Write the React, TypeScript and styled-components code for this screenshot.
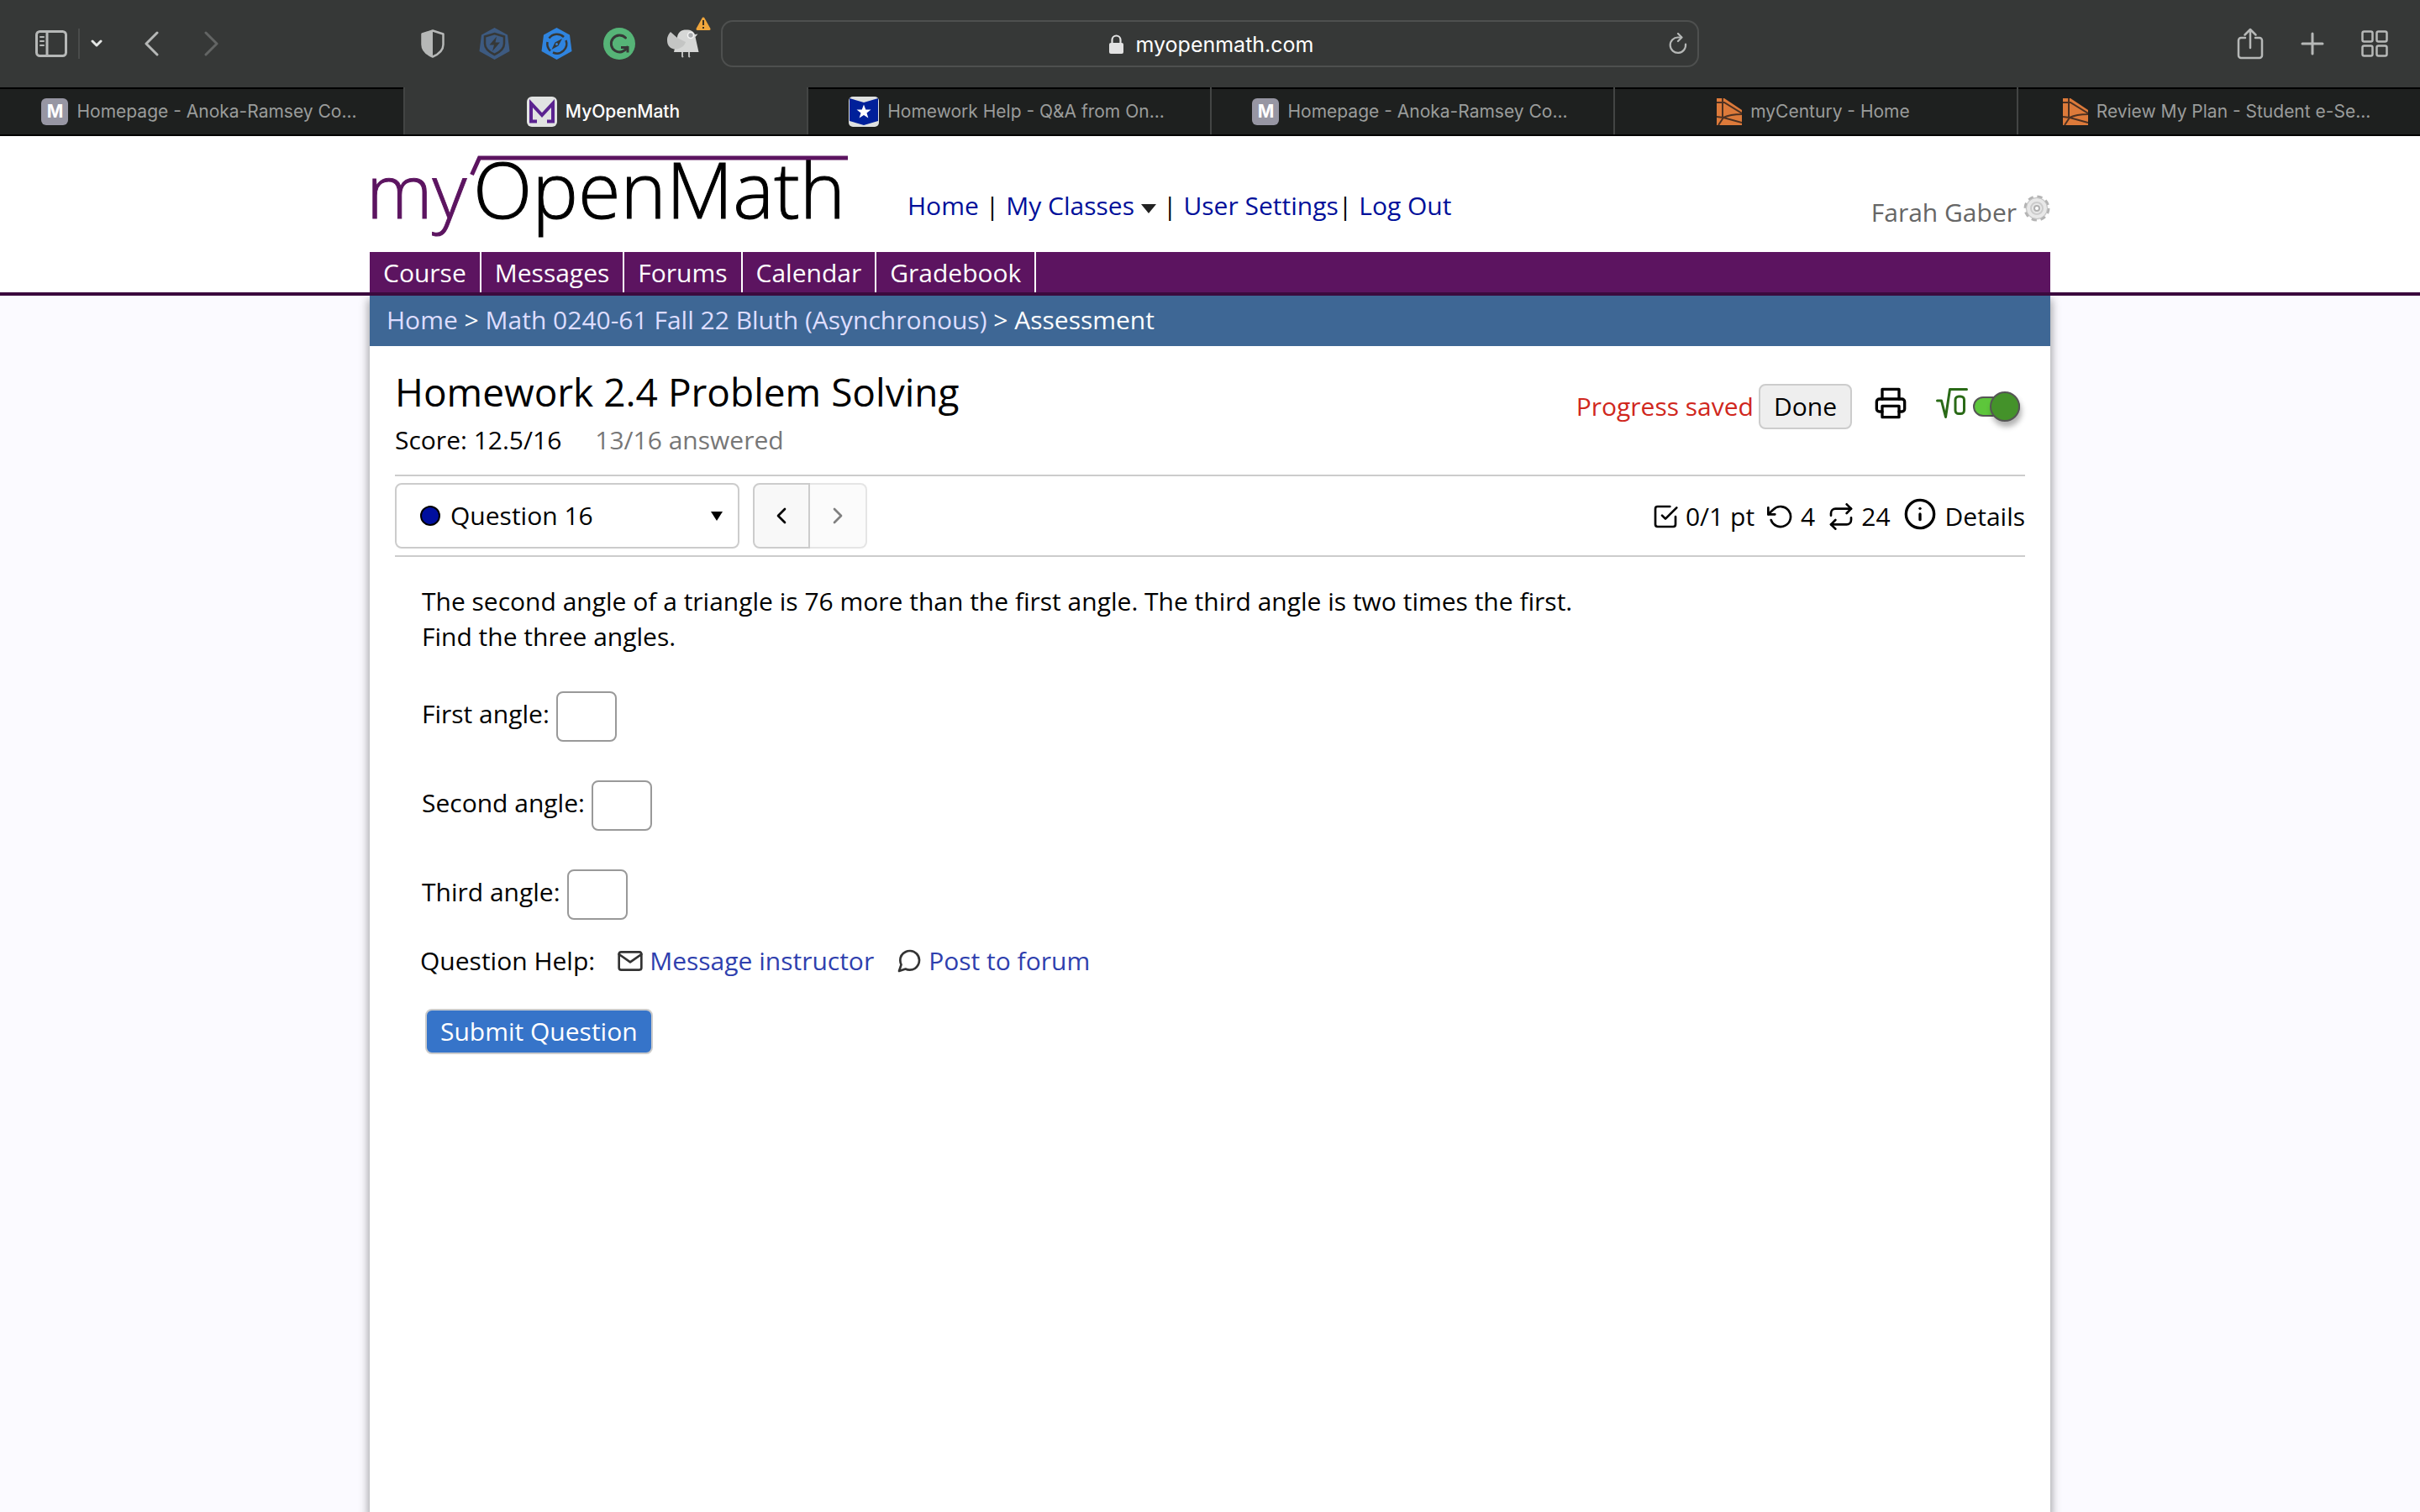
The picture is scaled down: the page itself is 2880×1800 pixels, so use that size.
import React from "react";
import styled, { createGlobalStyle, css } from "styled-components";
import {
  FiCheckSquare,
  FiChevronLeft,
  FiChevronRight,
  FiInfo,
  FiMail,
  FiMessageCircle,
  FiPrinter,
  FiRepeat,
  FiRotateCcw,
} from "react-icons/fi";

const color = {
  chrome: "#363837",
  tab: "#1e201f",
  tabText: "#9a9c9b",
  glyph: "#b6b8b7",
  purple: "#5c1460",
  purpleDark: "#3b0a3e",
  crumb: "#3e6795",
  crumbLink: "#ddddff",
  link: "#00109a",
  helpLink: "#2f3fae",
  rule: "#cccccc",
};

const siteFont = `"Open Sans", "Noto Sans", sans-serif`;
const systemFont = `Inter, "Liberation Sans", sans-serif`;

const GlobalStyle = createGlobalStyle`
  *, *::before, *::after { box-sizing: border-box; }
  html, body, #root { min-height: 100%; }
  body {
    margin: 0;
    background: #fbfaff;
    color: #000;
    font: 30px/42px ${siteFont};
  }
  a { color: inherit; text-decoration: none; }
  button, input, select { font: inherit; color: inherit; }
  svg { display: block; flex: none; }
`;

const Page = styled.div`
  min-height: 100vh;
  display: flex;
  flex-direction: column;
`;

/* ---------- browser window ---------- */

const Chrome = styled.header`
  background: ${color.chrome};
  border-bottom: 2px solid #000;
  font-family: ${systemFont};
`;

const Toolbar = styled.div`
  display: grid;
  grid-template-columns: minmax(0, 1fr) minmax(0, 1164px) minmax(0, 1fr);
  align-items: center;
  height: 104px;
`;

const ToolGroup = styled.div<{ $gap: number }>`
  display: flex;
  align-items: center;
  gap: ${(p) => p.$gap}px;
`;

const LeftTools = styled.div`
  display: flex;
  align-items: center;
  justify-content: space-between;
  padding: 0 12px 0 42px;
`;

const RightTools = styled(ToolGroup)`
  justify-content: flex-end;
  padding-right: 38px;
`;

const IconButton = styled.button<{ $dim?: boolean }>`
  display: flex;
  padding: 0;
  border: 0;
  background: none;
  color: ${(p) => (p.$dim ? "#636564" : color.glyph)};
`;

const BirdButton = styled(IconButton)`
  align-items: flex-start;
  height: 66px;
`;

const ToolDivider = styled.span`
  width: 2px;
  height: 36px;
  background: #4a4c4b;
`;

const AddressBar = styled.div`
  display: grid;
  grid-template-columns: 24px 1fr 24px;
  align-items: center;
  height: 56px;
  padding: 0 10px;
  border: 2px solid #4e504f;
  border-radius: 14px;
  color: #fff;
`;

const Address = styled.div`
  grid-column: 2;
  display: flex;
  align-items: center;
  justify-content: center;
  gap: 14px;
  padding: 2px 0 0 4px;
  font-size: 25px;
  line-height: 32px;
`;

const TabStrip = styled.nav`
  display: grid;
  grid-template-columns: repeat(6, minmax(0, 1fr));
`;

const Tab = styled.a<{ $active?: boolean }>`
  display: flex;
  align-items: center;
  justify-content: center;
  gap: 10px;
  height: 56px;
  padding: 2px 6px 0 0;
  border-left: 2px solid #434544;
  font-size: 21px;
  line-height: 28px;
  white-space: nowrap;
  ${(p) =>
    p.$active
      ? css`
          color: #fff;
          font-weight: 500;
        `
      : css`
          background: ${color.tab};
          color: ${color.tabText};
          box-shadow: inset 0 2px 0 #000;
        `}
  &:first-child {
    border-left: 0;
  }
`;

const LetterIcon = styled.span`
  display: grid;
  place-items: center;
  width: 32px;
  height: 32px;
  border-radius: 6px;
  background: #9796a3;
  color: #fff;
  font-size: 21px;
  font-weight: 700;
`;

/* ---------- site header ---------- */

const SiteHeader = styled.div`
  background: #fff;
  border-bottom: 4px solid ${color.purpleDark};
`;

const Wrap = styled.div`
  width: 100%;
  max-width: 2000px;
  margin: 0 auto;
`;

const TopRow = styled.div`
  display: flex;
  align-items: flex-end;
  height: 138px;
  padding-bottom: 20px;
`;

const UserLinks = styled.nav`
  display: flex;
  align-items: center;
  gap: 8px;
  margin: 0 auto 14px 68px;
  a {
    display: flex;
    align-items: center;
    gap: 8px;
    color: ${color.link};
  }
  svg {
    margin-top: 6px;
  }
`;

const TightPair = styled.span`
  display: flex;
`;

const UserName = styled.div`
  display: flex;
  align-items: flex-start;
  gap: 8px;
  margin-bottom: 6px;
  color: #666;
`;

const CourseNav = styled.nav`
  display: flex;
  background: ${color.purple};
  color: #fff;
  a {
    padding: 4px 16px 2px;
    border-right: 2px solid #fff;
  }
`;

/* ---------- assessment ---------- */

const Sheet = styled(Wrap)`
  flex: 1;
  background: #fff;
  box-shadow: 0 6px 10px 2px rgba(0, 0, 0, 0.35);
  clip-path: inset(0 -20px 0 -20px);
`;

const Breadcrumb = styled.nav`
  height: 60px;
  padding: 8px 20px;
  background: ${color.crumb};
  color: #fff;
  a {
    color: ${color.crumbLink};
  }
`;

const Main = styled.main`
  padding: 0 30px;
`;

const Heading = styled.div`
  display: flex;
  align-items: flex-start;
  justify-content: space-between;
  padding: 24px 0 20px;
  border-bottom: 2px solid ${color.rule};
`;

const Title = styled.h1`
  margin: 0 0 7px;
  font-size: 46px;
  line-height: 60px;
  font-weight: 400;
`;

const ScoreLine = styled.div`
  display: flex;
  gap: 40px;
`;

const Muted = styled.span`
  color: #777;
`;

const Actions = styled.div`
  display: flex;
  align-items: center;
  padding: 21px 6px 0 0;
`;

const Saved = styled.span`
  margin-right: 6px;
  color: #d0271d;
`;

const Button = styled.button<{ $primary?: boolean }>`
  height: 54px;
  padding: 0 16px;
  border: 2px solid ${color.rule};
  border-radius: 8px;
  background: ${(p) => (p.$primary ? "#3674c9" : "#eeeeee")};
  color: ${(p) => (p.$primary ? "#fff" : "#000")};
  line-height: 42px;
`;

const PrintButton = styled(IconButton)`
  margin: 0 34px 8px 26px;
  color: #000;
`;

const MathToggle = styled.label`
  display: flex;
  align-items: center;
  gap: 6px;
  > svg {
    margin-bottom: 8px;
  }
`;

const Switch = styled.input`
  appearance: none;
  display: flex;
  align-items: center;
  justify-content: flex-end;
  width: 56px;
  height: 24px;
  margin: 0;
  border: 2px solid #555;
  border-radius: 12px;
  background: #5dc63b;
  &::before {
    content: "";
    flex: none;
    width: 36px;
    height: 36px;
    margin-right: -2px;
    border: 2px solid #555;
    border-radius: 50%;
    background: #44922a;
    box-shadow: 2px 6px 6px rgba(0, 0, 0, 0.3);
  }
`;

const QuestionBar = styled.div`
  display: flex;
  align-items: center;
  padding: 8px 0;
  border-bottom: 2px solid ${color.rule};
`;

const Picker = styled.label`
  display: flex;
  align-items: center;
  gap: 12px;
  width: 410px;
  height: 78px;
  padding: 0 18px 0 28px;
  border: 2px solid ${color.rule};
  border-radius: 8px;
  select {
    flex: 1;
    appearance: none;
    padding: 0;
    border: 0;
    background: none;
  }
`;

const Dot = styled.span`
  width: 24px;
  height: 24px;
  border: 2px solid #000;
  border-radius: 50%;
  background: #000f9e;
`;

const Pager = styled.div`
  display: flex;
  margin: 0 auto 0 16px;
`;

const PagerButton = styled.button<{ $side: "left" | "right" }>`
  display: grid;
  place-items: center;
  width: 68px;
  height: 78px;
  padding: 0;
  border: 2px solid ${color.rule};
  border-radius: ${(p) => (p.$side === "left" ? "8px 0 0 8px" : "0 8px 8px 0")};
  background: #f8f8f8;
  color: #000;
  &:disabled {
    border-color: #e5e5e5;
    border-left: 0;
    background: #fbfbfb;
    color: #808080;
  }
`;

const Stats = styled.div`
  display: flex;
  align-items: center;
  gap: 15px;
  padding-top: 2px;
`;

const Stat = styled.span`
  display: flex;
  align-items: center;
  gap: 8px;
`;

const DetailsButton = styled.button`
  display: flex;
  align-items: flex-start;
  gap: 10px;
  padding: 0;
  border: 0;
  background: none;
  svg {
    margin-top: -2px;
  }
`;

const Question = styled.form`
  padding: 32px 30px;
`;

const Prompt = styled.p`
  margin: 0 0 44px;
  padding: 0 2px;
`;

const Answers = styled.div`
  display: grid;
  gap: 46px;
  padding: 0 2px;
`;

const Answer = styled.div`
  display: flex;
  gap: 8px;
  label {
    line-height: 54px;
  }
  input {
    width: 72px;
    height: 60px;
    padding: 0 8px;
    border: 2px solid #999;
    border-radius: 8px;
    background: #fff;
  }
`;

const Help = styled.div`
  display: flex;
  gap: 26px;
  margin: 28px 0 36px;
  a {
    display: flex;
    align-items: center;
    gap: 7px;
    color: ${color.helpLink};
  }
  svg {
    color: #333;
  }
`;

const SubmitRow = styled.div`
  padding: 0 6px;
`;

/* ---------- drawings ---------- */

const strokeProps = {
  fill: "none",
  stroke: "currentColor",
  strokeLinecap: "round" as const,
  strokeLinejoin: "round" as const,
};

const SidebarIcon = () => (
  <svg width="38" height="32" viewBox="0 0 38 32" {...strokeProps} strokeWidth="3">
    <rect x="1.5" y="1.5" width="35" height="29" rx="4" />
    <path d="M14 2v28" />
    <path d="M6 8h4M6 13h4M6 18h4" strokeWidth="2" />
  </svg>
);

const Caret = () => (
  <svg width="14" height="10" viewBox="0 0 14 10" {...strokeProps} stroke="#e4e6e5" strokeWidth="3">
    <path d="M2 2l5 5 5-5" />
  </svg>
);

const Chevron = ({ flip }: { flip?: boolean }) => (
  <svg width="18" height="30" viewBox="0 0 18 30" {...strokeProps} strokeWidth="3">
    <path d={flip ? "M2 2l13 13L2 28" : "M16 2L3 15l13 13"} />
  </svg>
);

const ShieldIcon = () => (
  <svg width="36" height="34" viewBox="-4 0 36 34">
    <path d="M14 1.5L26.5 5.5V18c0 7-5.5 11.5-12.5 14.5C7 29.5 1.5 25 1.5 18V5.5z" fill="none" stroke={color.glyph} strokeWidth="2.5" strokeLinejoin="round" />
    <path d="M14 1.5v31C7 29.5 1.5 25 1.5 18V5.5z" fill={color.glyph} />
  </svg>
);

const BoltIcon = () => (
  <svg width="37" height="38" viewBox="0 0 37 38">
    <path d="M18.5 0L34 8.5 36.5 28 18.5 38 .5 28 3 8.5z" fill="#3d5a80" />
    <path d="M18.5 7L30 10.5V19c0 6-5 10-11.5 13C12 29 7 25 7 19v-8.500z" fill="none" stroke={color.chrome} strokeWidth="2.5" />
    <path d="M21 10.5L12.5 20.5h5.500L16 28l9-10.500h-5.500z" fill={color.chrome} />
  </svg>
);

const CompassIcon = () => (
  <svg width="37" height="38" viewBox="0 0 37 38">
    <path d="M18.5 0L34 8.5 36.5 28 18.5 38 .5 28 3 8.5z" fill="#2f84df" />
    <path d="M9.500 12.500A11.500 11.500 0 0 1 27 11M29.500 15A11.500 11.500 0 0 1 14 29.500M7.500 17a11.500 11.500 0 0 0 3.500 10.500" fill="none" stroke={color.chrome} strokeWidth="2.5" />
    <path d="M25 13l-4.500 8.500L12.500 26l4-8.500z" fill={color.chrome} />
    <circle cx="18.5" cy="19.5" r="1.5" fill="#2f84df" />
  </svg>
);

const GrammarIcon = () => (
  <svg width="38" height="38" viewBox="0 0 38 38">
    <circle cx="19" cy="19" r="19" fill="#56b477" />
    <path d="M26.5 12A10 10 0 1 0 28.5 23" fill="none" stroke={color.chrome} strokeWidth="3" strokeLinecap="round" />
    <path d="M21 23.5h8v6" fill="none" stroke={color.chrome} strokeWidth="3" />
  </svg>
);

const BirdIcon = () => (
  <svg width="53" height="52" viewBox="0 0 53 52">
    <path d="M9 43L13 25c1-6 5-8.500 10.500-8.500 6 0 9 2 10.500 5.500l3.500-.5-3 3.500 4 18z" fill="#d6d7d6" />
    <path d="M1 29c0-3 .5-6 4-10l8 7 10 5c-2 6-8 9-14 8.500C3 38 1 34 1 29z" fill="#c4c5c4" />
    <path d="M19 43v5l1 1M27 43v5l1 1" stroke="#bdbebd" strokeWidth="2" fill="none" />
    <circle cx="29" cy="23" r="3.5" fill="#a8abad" stroke="#f4f4f4" strokeWidth="1.5" />
    <path d="M44 3L51 15.500H37z" fill="#f0a63c" stroke="#f0a63c" strokeWidth="3" strokeLinejoin="round" />
    <path d="M44 5v6M44 13v2" stroke="#3a3020" strokeWidth="2" />
  </svg>
);

const LockIcon = () => (
  <svg width="17" height="24" viewBox="0 0 17 24">
    <rect x="0" y="10" width="17" height="13" rx="2" fill="#e2e2e2" />
    <path d="M3.500 11V6.500a5 5 0 0 1 10 0V11" fill="none" stroke="#e2e2e2" strokeWidth="2.2" />
  </svg>
);

const ReloadIcon = () => (
  <svg width="22" height="26" viewBox="0 0 22 26" {...strokeProps} strokeWidth="2.2">
    <path d="M20 13.500A9.200 9.200 0 1 1 11 5.500h4" />
    <path d="M11 1l4.500 4.500L11 10" />
  </svg>
);

const ShareIcon = () => (
  <svg width="32" height="38" viewBox="0 0 32 38" {...strokeProps} strokeWidth="2.5">
    <path d="M10 12H5a3 3 0 0 0-3 3v18a3 3 0 0 0 3 3h22a3 3 0 0 0 3-3V15a3 3 0 0 0-3-3h-5" />
    <path d="M16 24V2M9.500 8.500L16 2l6.500 6.500" />
  </svg>
);

const PlusIcon = () => (
  <svg width="28" height="28" viewBox="0 0 28 28" {...strokeProps} strokeWidth="3">
    <path d="M14 2v24M2 14h24" />
  </svg>
);

const GridIcon = () => (
  <svg width="32" height="32" viewBox="0 0 32 32" {...strokeProps} strokeWidth="2.5">
    <rect x="1.5" y="1.5" width="12" height="12" rx="2" />
    <rect x="18.5" y="1.5" width="12" height="12" rx="2" />
    <rect x="1.5" y="18.5" width="12" height="12" rx="2" />
    <rect x="18.5" y="18.5" width="12" height="12" rx="2" />
  </svg>
);

const OpenMathIcon = () => (
  <svg width="36" height="36" viewBox="0 0 36 36">
    <rect width="36" height="36" rx="6" fill="#e1e3e2" />
    <path d="M12 29.500H5V8l13 14L31 8v21.500h-7" fill="none" stroke="#5b2390" strokeWidth="4" />
  </svg>
);

const StarIcon = () => (
  <svg width="36" height="36" viewBox="0 0 36 36">
    <rect width="36" height="36" rx="5" fill="#dfe1e0" />
    <path d="M1 2l17 5 17-5v27l-17 5-17-5z" fill="#00209a" />
    <path d="M18 9.500l2.300 6h6.200l-5 3.900 1.900 6.200-5.400-3.700-5.400 3.700 1.900-6.200-5-3.900h6.200z" fill="#fff" />
  </svg>
);

const CenturyIcon = () => (
  <svg width="30" height="32" viewBox="0 0 30 32">
    <path d="M0 0h9l21 14v18H0z" fill="#dd7a3a" />
    <path d="M0 5h9l21 13M7 0v22M0 22l8 1 22 6M8 23c8-4 15-4 22-4M8 23L2 32" fill="none" stroke="#4c3122" strokeWidth="2" />
  </svg>
);

const Logo = () => (
  <svg width="572" height="100" viewBox="0 0 572 100" role="img" aria-label="myOpenMath" overflow="visible">
    <g fontFamily="Open Sans, sans-serif" fontWeight="300" strokeWidth="1">
      <text x="-4" y="80" fontSize="89" fill={color.purple} stroke={color.purple}>my</text>
      <text x="123" y="80" fontSize="92" fill="#000" stroke="#000">OpenMath</text>
    </g>
    <path d="M121.500 28l9-20H569" fill="none" stroke={color.purple} strokeWidth="5" />
  </svg>
);

const DownTriangle = ({ size = 14, fill = "#000" }: { size?: number; fill?: string }) => (
  <svg width={size} height="11" viewBox="0 0 16 12" preserveAspectRatio="none" aria-hidden="true">
    <path d="M0 0h16L8 12z" fill={fill} />
  </svg>
);

const GearIcon = () => (
  <svg width="32" height="32" viewBox="0 0 32 32">
    <circle cx="16" cy="16" r="13.5" fill="#e0e0e0" stroke="#b4b4b4" strokeWidth="4" strokeDasharray="6 4.6" />
    <circle cx="16" cy="16" r="12.5" fill="#e8e8e8" stroke="#c4c4c4" />
    <circle cx="16" cy="16" r="7" fill="none" stroke="#cccccc" strokeWidth="2" />
    <circle cx="16" cy="16" r="3" fill="#fff" stroke="#b0b0b0" strokeWidth="2" />
  </svg>
);

const RootIcon = () => (
  <svg width="38" height="38" viewBox="0 0 38 38" {...strokeProps} stroke="#2a6a17" strokeWidth="3">
    <path d="M1.500 16h5l5 19.500L16.500 2.500h20" />
    <rect x="23" y="11" width="10.5" height="20.5" rx="4" />
  </svg>
);

/* ---------- page ---------- */

const tabs = [
  { title: "Homepage - Anoka-Ramsey Co...", icon: <LetterIcon>M</LetterIcon> },
  { title: "MyOpenMath", icon: <OpenMathIcon />, active: true },
  { title: "Homework Help - Q&A from On...", icon: <StarIcon /> },
  { title: "Homepage - Anoka-Ramsey Co...", icon: <LetterIcon>M</LetterIcon> },
  { title: "myCentury - Home", icon: <CenturyIcon /> },
  { title: "Review My Plan - Student e-Se...", icon: <CenturyIcon /> },
];

const sections = ["Course", "Messages", "Forums", "Calendar", "Gradebook"];

const answers = [
  { id: "first", label: "First angle:" },
  { id: "second", label: "Second angle:" },
  { id: "third", label: "Third angle:" },
];

export default function App() {
  return (
    <Page>
      <GlobalStyle />
      <Chrome>
        <Toolbar>
          <LeftTools>
            <ToolGroup $gap={49}>
              <ToolGroup $gap={13}>
                <IconButton aria-label="Sidebar"><SidebarIcon /></IconButton>
                <ToolDivider />
                <IconButton aria-label="Tab groups"><Caret /></IconButton>
              </ToolGroup>
              <ToolGroup $gap={54}>
                <IconButton aria-label="Back"><Chevron /></IconButton>
                <IconButton aria-label="Forward" $dim><Chevron flip /></IconButton>
              </ToolGroup>
            </ToolGroup>
            <ToolGroup $gap={37}>
              <IconButton aria-label="Privacy report"><ShieldIcon /></IconButton>
              <IconButton aria-label="Web protection"><BoltIcon /></IconButton>
              <IconButton aria-label="Safe browsing"><CompassIcon /></IconButton>
              <IconButton aria-label="Writing assistant"><GrammarIcon /></IconButton>
              <BirdButton aria-label="Notifications"><BirdIcon /></BirdButton>
            </ToolGroup>
          </LeftTools>
          <AddressBar>
            <Address><LockIcon />myopenmath.com</Address>
            <IconButton aria-label="Reload"><ReloadIcon /></IconButton>
          </AddressBar>
          <RightTools $gap={44}>
            <IconButton aria-label="Share"><ShareIcon /></IconButton>
            <IconButton aria-label="New tab"><PlusIcon /></IconButton>
            <IconButton aria-label="Tab overview"><GridIcon /></IconButton>
          </RightTools>
        </Toolbar>
        <TabStrip aria-label="Tabs">
          {tabs.map((t, i) => (
            <Tab key={i} href="#" $active={t.active}>
              {t.icon}
              {t.title}
            </Tab>
          ))}
        </TabStrip>
      </Chrome>

      <SiteHeader>
        <Wrap>
          <TopRow>
            <Logo />
            <UserLinks>
              <a href="#">Home</a>|
              <a href="#">My Classes <DownTriangle size={18} fill="#222" /></a>|
              <TightPair><a href="#">User Settings</a>|</TightPair>
              <a href="#">Log Out</a>
            </UserLinks>
            <UserName>Farah Gaber <GearIcon /></UserName>
          </TopRow>
          <CourseNav>
            {sections.map((s) => (
              <a key={s} href="#">{s}</a>
            ))}
          </CourseNav>
        </Wrap>
      </SiteHeader>

      <Sheet>
        <Breadcrumb>
          <a href="#">Home</a> &gt; <a href="#">Math 0240-61 Fall 22 Bluth (Asynchronous)</a> &gt; Assessment
        </Breadcrumb>
        <Main>
          <Heading>
            <div>
              <Title>Homework 2.4 Problem Solving</Title>
              <ScoreLine>
                <span>Score: 12.5/16</span>
                <Muted>13/16 answered</Muted>
              </ScoreLine>
            </div>
            <Actions>
              <Saved>Progress saved</Saved>
              <Button type="button">Done</Button>
              <PrintButton aria-label="Print"><FiPrinter size={40} /></PrintButton>
              <MathToggle>
                <RootIcon />
                <Switch type="checkbox" defaultChecked aria-label="Equation editor" />
              </MathToggle>
            </Actions>
          </Heading>

          <QuestionBar>
            <Picker>
              <Dot />
              <select aria-label="Question">
                <option>Question 16</option>
              </select>
              <DownTriangle />
            </Picker>
            <Pager>
              <PagerButton $side="left" aria-label="Previous question"><FiChevronLeft size={32} /></PagerButton>
              <PagerButton $side="right" aria-label="Next question" disabled><FiChevronRight size={32} /></PagerButton>
            </Pager>
            <Stats>
              <Stat><FiCheckSquare size={32} />0/1 pt</Stat>
              <Stat><FiRotateCcw size={32} />4</Stat>
              <Stat><FiRepeat size={32} />24</Stat>
              <DetailsButton type="button"><FiInfo size={40} />Details</DetailsButton>
            </Stats>
          </QuestionBar>

          <Question>
            <Prompt>
              The second angle of a triangle is 76 more than the first angle. The third angle is two times the first.
              <br />
              Find the three angles.
            </Prompt>
            <Answers>
              {answers.map((a) => (
                <Answer key={a.id}>
                  <label htmlFor={a.id}>{a.label}</label>
                  <input id={a.id} type="text" />
                </Answer>
              ))}
            </Answers>
            <Help>
              <span>Question Help:</span>
              <a href="#"><FiMail size={32} />Message instructor</a>
              <a href="#"><FiMessageCircle size={32} />Post to forum</a>
            </Help>
            <SubmitRow>
              <Button type="button" $primary>Submit Question</Button>
            </SubmitRow>
          </Question>
        </Main>
      </Sheet>
    </Page>
  );
}
